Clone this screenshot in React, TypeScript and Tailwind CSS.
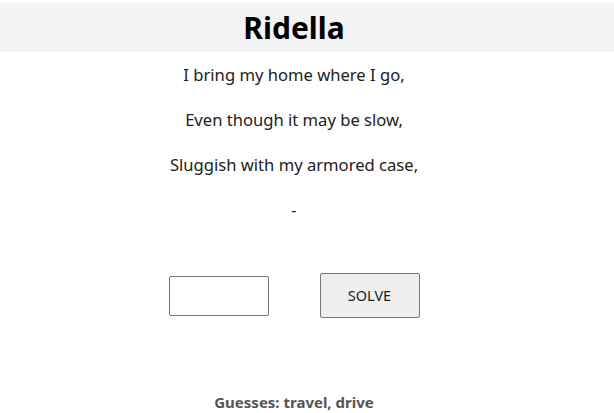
export default function App() {
  const lines = [
    'I bring my home where I go,',
    'Even though it may be slow,',
    'Sluggish with my armored case,',
    '-',
  ];
  return (
    <div
      className="min-h-[413px] bg-white text-[#212121]"
      style={{ fontFamily: '"Noto Sans", "Open Sans", sans-serif' }}
    >
      <div className="pt-[3px]">
        <header className="flex h-[49px] items-center bg-[#f4f4f4]">
          <h1 className="w-[588px] text-center text-[30px] font-bold leading-none text-black">Ridella</h1>
        </header>
      </div>
      <div className="flex w-[588px] flex-col items-center">
        <div className="mt-[11px] flex flex-col items-center gap-[21px] text-[16.6px] leading-[24px]">
          {lines.map((l, i) => (
            <p key={i}>{l}</p>
          ))}
        </div>
        <div className="mt-[51px] flex items-center gap-[51px]">
          <input
            type="text"
            className="h-[40px] w-[100px] rounded-[2px] border border-[#767676] bg-white px-2"
          />
          <button className="h-[45px] w-[100px] rounded-[2px] border border-[#767676] bg-[#efefef] text-[14.5px] text-[#222]">
            SOLVE
          </button>
        </div>
        <p className="mt-[74px] text-[15px] font-bold leading-[20px] text-[#555]">Guesses: travel, drive</p>
      </div>
    </div>
  );
}
